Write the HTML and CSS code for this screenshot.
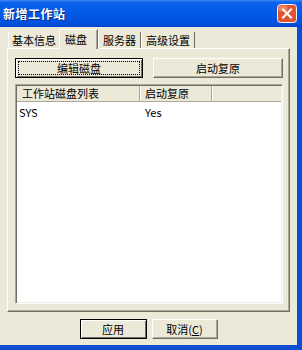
FILE: index.html
```html
<!DOCTYPE html>
<html lang="zh-CN">

<head>
    <meta charset="UTF-8">
    <title>新增工作站</title>
    <link rel="stylesheet" href="styles.css">
</head>

<body>
    <div class="window">
        <div class="titlebar">
            <span class="title">新增工作站</span>
            <svg class="close" width="20" height="19" viewBox="0 0 20 19">
                <rect x="0.5" y="0.5" width="19" height="18" rx="3" fill="#e0552f" stroke="#f6f6f6" />
                <rect x="1.5" y="1.5" width="9" height="6" rx="2" fill="#ee8262" />
                <path d="M6 5.5 L14 13.5 M14 5.5 L6 13.5" stroke="#fff" stroke-width="2" stroke-linecap="square" />
            </svg>
        </div>

        <div class="client">
            <!-- 分頁 -->
            <div class="tabs">
                <span class="tab first">基本信息</span>
                <span class="tab active">磁盘</span>
                <span class="tab">服务器</span>
                <span class="tab">高级设置</span>
            </div>

            <div class="panel">
                <div class="panel-buttons">
                    <button class="btn btn-edit"><span class="focus">编辑磁盘</span></button>
                    <button class="btn btn-restore">启动复原</button>
                </div>

                <!-- 磁盘列表 -->
                <div class="listview">
                    <div class="lv-header">
                        <span class="col col-name">工作站磁盘列表</span>
                        <span class="col col-restore">启动复原</span>
                        <span class="col col-rest"></span>
                    </div>
                    <div class="lv-row">
                        <span class="col col-name">SYS</span>
                        <span class="col col-restore">Yes</span>
                    </div>
                </div>
            </div>

            <div class="footer">
                <button class="btn btn-default">应用</button>
                <button class="btn btn-cancel">取消(<u>C</u>)</button>
            </div>
        </div>
    </div>
</body>

</html>
```

FILE: styles.css
```css
/* 頁面 */
html,
body {
    margin: 0;
    padding: 0;
    background-color: #ece9d8;
}

body {
    font-family: "Noto Sans CJK SC", "DejaVu Sans", sans-serif;
    font-size: 11px;
    color: #000;
}

/* 視窗 */
.window {
    width: 302px;
    height: 350px;
    display: flex;
    flex-direction: column;
    overflow: hidden;
}

.titlebar {
    height: 27px;
    flex: none;
    display: flex;
    align-items: center;
    justify-content: space-between;
    padding: 0 5px 0 3px;
    box-sizing: border-box;
    background: linear-gradient(#3a86f4 0%, #0a62ec 10%, #0058e6 50%, #0052de 85%, #0046cc 100%);
}

.title {
    color: #fff;
    font-weight: bold;
    font-size: 12px;
    letter-spacing: 0.5px;
    text-shadow: 1px 1px 0 #0a2a80;
}

.close {
    display: block;
    flex: none;
}

.client {
    flex: 1;
    display: flex;
    flex-direction: column;
    border-right: 5px solid #0a4fd0;
    border-bottom: 5px solid #0a4fd0;
    background-color: #ece9d8;
}

/* 分頁 */
.tabs {
    display: flex;
    align-items: flex-end;
    height: 21px;
    padding-left: 8px;
    position: relative;
    z-index: 1;
}

.tab {
    height: 16px;
    line-height: 16px;
    padding: 0 3px 0 4px;
    border-left: 1px solid #fff;
    border-right: 1px solid #716f64;
    white-space: nowrap;
}

.tab.first {
    padding-left: 3px;
    border-right: none;
    width: 44px;
}

.tab.active {
    height: 19px;
    line-height: 18px;
    width: 32px;
    padding: 0 0 0 5px;
    margin-bottom: -1px;
    border-top: 1px solid #fff;
    background-color: #ece9d8;
    box-shadow: inset -1px 0 0 #aca899;
}

.tab:nth-child(3) {
    width: 34px;
}

.tab:nth-child(4) {
    width: 45px;
}

/* 分頁內容 */
.panel {
    margin-left: 7px;
    width: 283px;
    height: 264px;
    box-sizing: border-box;
    border-top: 1px solid #fff;
    border-left: 1px solid #fff;
    border-right: 1px solid #716f64;
    border-bottom: 1px solid #716f64;
    box-shadow: inset -1px -1px 0 #aca899;
    padding: 9px 6px 7px 7px;
    display: flex;
    flex-direction: column;
}

.panel-buttons {
    display: flex;
    gap: 10px;
}

.btn {
    font-family: inherit;
    font-size: 11px;
    height: 20px;
    margin: 0;
    padding: 0;
    box-sizing: border-box;
    background-color: #ece9d8;
    border: 1px solid;
    border-color: #fff #716f64 #716f64 #fff;
    box-shadow: inset -1px -1px 0 #aca899;
    color: #000;
}

.btn-edit {
    width: 128px;
    border-color: #000;
    box-shadow: inset 1px 1px 0 #fff, inset -1px -1px 0 #716f64;
    padding: 2px;
}

.btn-edit .focus {
    display: block;
    height: 100%;
    box-sizing: border-box;
    border: 1px dotted #000;
    line-height: 12px;
}

.btn-restore {
    width: 130px;
}

/* 列表 */
.listview {
    flex: 1;
    margin-top: 6px;
    background-color: #fff;
    border: 1px solid;
    border-color: #aca899 #fff #fff #aca899;
    box-shadow: inset 1px 1px 0 #716f64, inset -1px -1px 0 #f1efe2;
    display: flex;
    flex-direction: column;
    padding: 1px 1px 0 1px;
}

.lv-header {
    display: flex;
    height: 16px;
    line-height: 15px;
    background-color: #ece9d8;
    border-bottom: 1px solid #aca899;
    box-sizing: border-box;
}

.lv-header .col {
    box-sizing: border-box;
    border-right: 1px solid #aca899;
    box-shadow: 1px 0 0 #fff;
    padding-left: 5px;
}

.col-name {
    width: 123px;
}

.col-restore {
    width: 72px;
}

.lv-header .col-rest {
    flex: 1;
    border-right: none;
    box-shadow: none;
}

.lv-row {
    display: flex;
    height: 17px;
    line-height: 17px;
    margin-top: 2px;
}

.lv-row .col {
    box-sizing: border-box;
    padding-left: 2px;
}

.lv-row .col-restore {
    padding-left: 5px;
}

/* 底部按鈕 */
.footer {
    display: flex;
    justify-content: center;
    gap: 5px;
    margin-top: 7px;
}

.btn-default {
    width: 67px;
    border-color: #000;
    box-shadow: inset 1px 1px 0 #fff, inset -1px -1px 0 #716f64;
}

.btn-cancel {
    width: 66px;
}
```
